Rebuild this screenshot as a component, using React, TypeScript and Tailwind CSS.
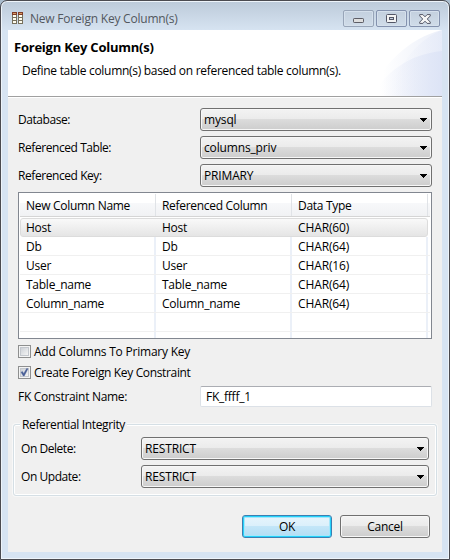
import React from "react";

function Combo({ value, className }: { value: string; className: string }) {
  return (
    <div className={`flex h-[23px] items-center justify-between rounded-[3px] border border-[#707070] bg-[linear-gradient(#f3f3f3_0%,#ebebeb_48%,#dcdcdc_50%,#cdcdcd_100%)] pr-1 pl-[3px] shadow-[inset_0_0_0_1px_#f7f7f7] ${className}`}>
      <span className="tracking-[-0.15px]">{value}</span>
      <svg width="7" height="4" viewBox="0 0 7 4" shapeRendering="crispEdges">
        <path d="M0 0h7v1H6v1H5v1H4v1H3V3H2V2H1V1H0z" fill="#000" />
      </svg>
    </div>
  );
}

function Field({ label, value }: { label: string; value: string }) {
  return (
    <div className="flex h-[23px] items-center">
      <span className="w-[182px] tracking-[-0.43px]">{label}</span>
      <Combo value={value} className="w-[232px]" />
    </div>
  );
}

function Check({ label, spacing, checked = false }: { label: string; spacing: string; checked?: boolean }) {
  return (
    <div className="flex h-[13px] items-center gap-[3px]">
      <svg width="13" height="13" viewBox="0 0 13 13">
        <defs>
          <linearGradient id="box" x1="0" y1="0" x2="1" y2="1">
            <stop offset="0" stopColor="#cbcfd5" />
            <stop offset="1" stopColor="#f6f6f6" />
          </linearGradient>
        </defs>
        <rect x=".5" y=".5" width="12" height="12" fill="#f4f4f4" stroke="#8e8f8f" />
        <rect x="2.5" y="2.5" width="8" height="8" fill="url(#box)" stroke="#c3c7cd" />
        {checked && <path d="M3 6.2 4.4 5.4 5.7 7.5 8.7 2.5 10 2.8 6.2 10H5.3z" fill="#4a5f97" stroke="#4a5f97" strokeWidth=".4" />}
      </svg>
      <span className={spacing}>{label}</span>
    </div>
  );
}

function WindowButton({ children, light = false }: { children: React.ReactNode; light?: boolean }) {
  return (
    <div className={`flex h-[17px] w-[31px] items-center justify-center rounded-[2px] border bg-[linear-gradient(#c3d0de,#d0dce9)] shadow-[inset_0_0_0_1px_#d5e0ec] ${light ? "border-[#98a5b8]" : "border-[#8492ae]"}`}>
      {children}
    </div>
  );
}

const rows = [
  ["Host", "Host", "CHAR(60)"],
  ["Db", "Db", "CHAR(64)"],
  ["User", "User", "CHAR(16)"],
  ["Table_name", "Table_name", "CHAR(64)"],
  ["Column_name", "Column_name", "CHAR(64)"],
  ["", "", ""],
];

export default function App() {
  return (
    <div className="h-[560px] w-[450px] bg-[#a9bccd]">
      <div className="flex h-[560px] w-[450px] flex-col overflow-hidden rounded-t-[7px] border border-[#4b4b50] bg-[linear-gradient(#bccad9_0px,#d7e4f2_30px)] px-[7px] pb-[7px] font-['Open_Sans','Noto_Sans',sans-serif] text-[12px] leading-[16px] tracking-[-0.25px] whitespace-nowrap text-black shadow-[inset_0_0_0_1px_#eef4fa]">
        <div className="flex h-[29px] shrink-0 items-start">
          <svg className="mt-[11px] ml-1 shrink-0" width="11" height="12" viewBox="0 0 11 12" shapeRendering="crispEdges">
            {[0, 6].map((x) => (
              <g key={x}>
                <rect x={x} y="0" width="5" height="12" fill="#77705d" />
                <rect x={x} y="0" width="5" height="3" fill="#803c28" />
                <rect x={x + 1} y="1" width="3" height="1" fill="#d79a61" />
                <rect x={x + 1} y="3" width="3" height="2" fill="#fffdf0" />
                <rect x={x + 1} y="6" width="3" height="2" fill="#fffdf0" />
                <rect x={x + 1} y="9" width="3" height="2" fill="#fffdf0" />
              </g>
            ))}
          </svg>
          <span className="mt-[10px] ml-[7px] flex-1 tracking-[-0.21px] text-[#52575e]">New Foreign Key Column(s)</span>
          <div className="mt-[9px] mr-[2px] flex gap-[2px]">
            <WindowButton light>
              <svg className="mt-1" width="11" height="5" viewBox="0 0 11 5"><rect x=".5" y=".5" width="10" height="4" rx=".7" fill="#dedede" stroke="#5d5d66" /></svg>
            </WindowButton>
            <WindowButton>
              <svg width="11" height="9" viewBox="0 0 11 9">
                <rect x=".5" y=".5" width="10" height="8" rx="1" fill="#f3f3f3" stroke="#535666" />
                <rect x="3.5" y="3.5" width="4" height="2" fill="#c4d1e0" stroke="#535666" />
              </svg>
            </WindowButton>
            <WindowButton>
              <svg width="12" height="10" viewBox="0 0 12 10">
                <path d="M.7.6h3.2L6 2.8 8.1.6h3.2v1.3L8.3 5l3 3.1v1.3H8.1L6 7.2 3.9 9.4H.7V8.1l3-3.1-3-3.1z" fill="#f5f5f5" stroke="#535666" strokeLinejoin="round" />
              </svg>
            </WindowButton>
          </div>
        </div>
        <div className="flex w-[434px] flex-1 flex-col bg-[#f0f0f0]">
          <div className="relative h-[68px] shrink-0 border-b border-white bg-white">
            <div className="absolute inset-x-0 bottom-0 h-px bg-[#a0a0a0]" />
            <svg className="absolute top-0 right-0" width="80" height="66" viewBox="0 0 80 66">
              <defs>
                <linearGradient id="outer"><stop offset=".2" stopColor="#fff" /><stop offset="1" stopColor="#ebeff9" /></linearGradient>
                <linearGradient id="inner"><stop offset=".1" stopColor="#e9edf9" stopOpacity="0" /><stop offset="1" stopColor="#dde4f6" /></linearGradient>
              </defs>
              <path d="M6 66C20 36 46 8 80 0V66z" fill="url(#outer)" />
              <path d="M32 50C42 30 56 10 80 0V66H26z" fill="url(#inner)" opacity=".4" />
              <path d="M10 66C22 44 46 24 80 21V66z" fill="url(#inner)" />
            </svg>
            <div className="relative pt-[9px] pl-[6px] text-[13px] font-bold tracking-[-0.23px]">Foreign Key Column(s)</div>
            <div className="relative pt-[8px] pl-[14px] tracking-[-0.3px]">Define table column(s) based on referenced table column(s).</div>
          </div>
          <div className="flex flex-col px-[10px] pt-[10px]">
            <div className="flex flex-col gap-[5px]">
              <Field label="Database:" value="mysql" />
              <Field label="Referenced Table:" value="columns_priv" />
              <Field label="Referenced Key:" value="PRIMARY" />
            </div>
            <div className="mt-[5px] h-[147px] w-[414px] overflow-hidden border border-[#828790] bg-white px-px pt-px">
              <div className="grid h-[23px] grid-cols-[136px_136px_136px_1fr] border-b border-[#d5d5d5] bg-[linear-gradient(#fff_42%,#f7f8fa_43%,#f1f2f4)]">
                {["New Column Name", "Referenced Column", "Data Type"].map((h) => (
                  <span key={h} className="border-r border-[#e0e3e7] pt-[4px] pl-[6px] tracking-[-0.3px]">{h}</span>
                ))}
              </div>
              {rows.map((r, i) => (
                <div key={i} className={`grid h-[19px] ${i === 0 ? "mt-px w-[408px] grid-cols-[136px_136px_134px] rounded-[3px] border border-[#dcdcdc] bg-[linear-gradient(#f9f9f9,#e5e5e5)]" : "grid-cols-[136px_136px_136px_1fr] border-b border-[#f0f0f0]"}`}>
                  {r.map((c, j) => (
                    <span key={j} className={`h-[18px] pl-[6px] ${j === 2 ? "tracking-[-0.12px]" : ""} ${i === 0 ? "-mt-px -ml-px pt-[2px]" : "border-r-2 border-[#ebf0f8] pt-[2px]"}`}>{c}</span>
                  ))}
                </div>
              ))}
              <div className="grid h-[6px] grid-cols-[136px_136px_136px]">
                {[0, 1, 2].map((i) => <span key={i} className="border-r-2 border-[#ebf0f8]" />)}
              </div>
            </div>
            <div className="mt-[6px] flex flex-col gap-2">
              <Check label="Add Columns To Primary Key" spacing="tracking-[-0.22px]" />
              <Check label="Create Foreign Key Constraint" spacing="tracking-[-0.35px]" checked />
            </div>
            <div className="mt-[7px] flex h-[21px] items-center">
              <span className="w-[182px] tracking-[-0.3px]">FK Constraint Name:</span>
              <div className="flex h-[21px] w-[232px] items-center rounded-[2px] border border-[#dce1e7] border-t-[#abadb3] bg-white pl-[5px]">FK_ffff_1</div>
            </div>
          </div>
          <fieldset className="relative mx-[5px] mt-[17px] h-[72px] rounded-[3px] border border-[#d5dfe5] pt-[12px] pl-[7px] shadow-[inset_0_0_0_1px_#fff,0_0_0_1px_#f8f8f8]">
            <span className="absolute top-[-8px] left-[6px] bg-[#f0f0f0] px-[2px] tracking-[-0.36px]">Referential Integrity</span>
            <div className="flex flex-col gap-[5px]">
              {["On Delete:", "On Update:"].map((l) => (
                <div key={l} className="flex h-[23px] items-center">
                  <span className="w-[120px] tracking-[-0.45px]">{l}</span>
                  <Combo value="RESTRICT" className="w-[288px]" />
                </div>
              ))}
            </div>
          </fieldset>
          <div className="mt-[19px] flex justify-end gap-2 pr-[12px]">
            <button className="h-[23px] w-[90px] rounded-[3px] border border-[#3c7fb1] bg-[linear-gradient(#e7f5fc_0%,#dbf0fb_47%,#c3e6f8_50%,#b2ddf4_100%)] shadow-[inset_0_0_0_1px_#24d2fb,inset_0_0_0_2px_#a6e7fb]">OK</button>
            <button className="h-[23px] w-[90px] rounded-[3px] border border-[#707070] bg-[linear-gradient(#f3f3f3_0%,#ebebeb_48%,#dcdcdc_50%,#cdcdcd_100%)] shadow-[inset_0_0_0_1px_#f7f7f7]">Cancel</button>
          </div>
        </div>
      </div>
    </div>
  );
}
